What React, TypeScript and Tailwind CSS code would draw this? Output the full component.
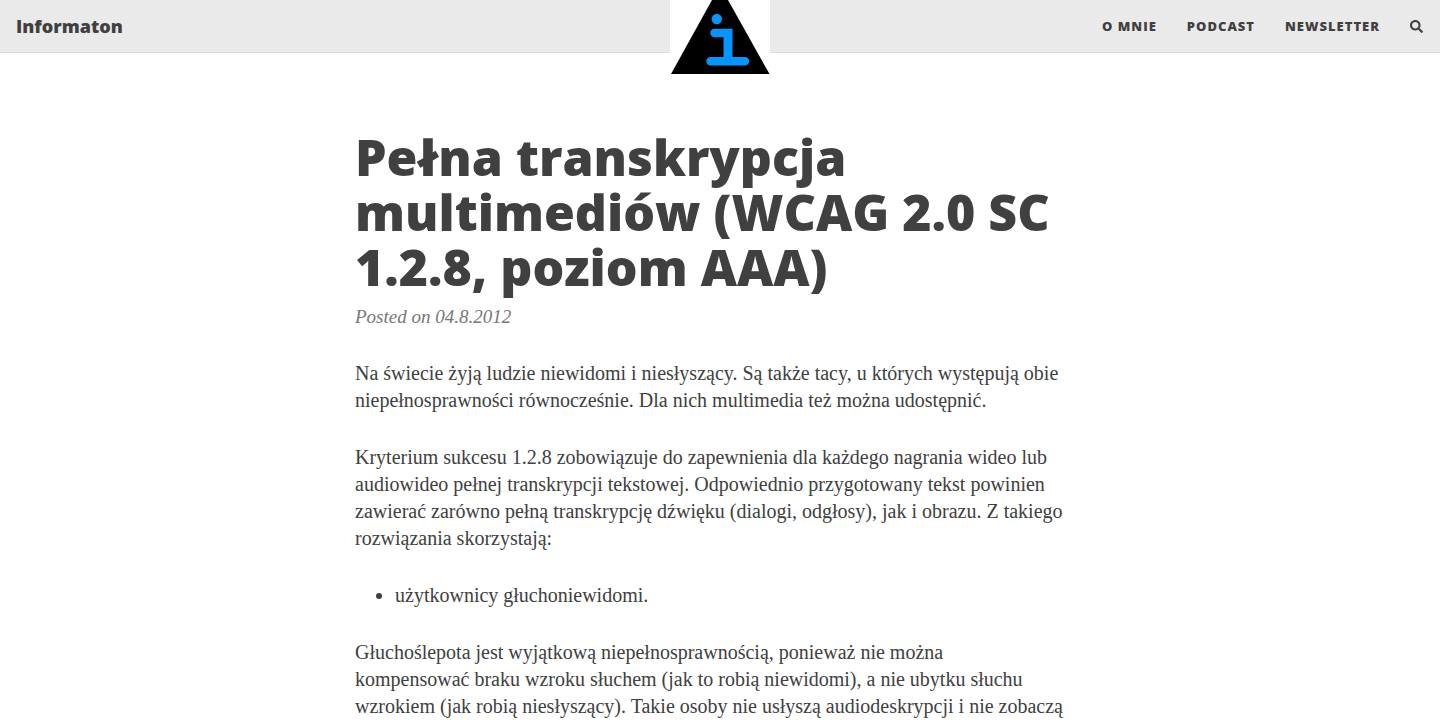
import { FaSearch } from "react-icons/fa";

const links = ["O mnie", "Podcast", "Newsletter"];

function Logo() {
  return (
    <svg viewBox="0 0 100 84" className="h-[84px] w-[100px] bg-white" aria-hidden="true">
      <path d="M42 0H58L99.5 74H1Z" fill="#000" />
      <circle cx="46.8" cy="19" r="5.2" fill="#0495ff" />
      <path
        d="M44.5 28.8H62.5V57H75a4.2 4.2 0 0 1 0 8.4H40.5a4.2 4.2 0 0 1 0-8.4H53.5V37.2H44.5a4.2 4.2 0 0 1 0-8.4Z"
        fill="#0495ff"
      />
    </svg>
  );
}

function Header() {
  return (
    <header className="relative flex items-center justify-between border-b border-[#dddddd] bg-[#eaeaea] pr-[17px] pl-4 font-['Open_Sans',sans-serif] text-[#404040]">
      <a href="#" className="py-3 text-lg leading-7 font-extrabold">
        Informaton
      </a>
      <a href="#" aria-label="Informaton" className="absolute top-0 left-1/2 -translate-x-1/2">
        <Logo />
      </a>
      <nav className="flex items-center gap-[30px] text-[13px] leading-5 font-extrabold tracking-[1px] uppercase">
        {links.map((link) => (
          <a key={link} href="#">
            {link}
          </a>
        ))}
        <button type="button" aria-label="Search">
          <FaSearch />
        </button>
      </nav>
    </header>
  );
}

export default function App() {
  return (
    <div className="h-screen overflow-hidden bg-white text-[#404040]">
      <Header />
      <main className="mx-auto max-w-[730px] pt-[77px] font-['Liberation_Serif',serif] text-xl leading-[27px]">
        <h1 className="font-['Open_Sans',sans-serif] text-[50px] leading-[55px] font-extrabold">
          Pełna transkrypcja
          <br />
          multimediów (WCAG 2.0 SC
          <br />
          1.2.8, poziom AAA)
        </h1>
        <p className="mt-2 text-[19px] text-[#777777] italic">Posted on 04.8.2012</p>
        <article className="mt-[30px] flex flex-col gap-[30px]">
          <p>
            Na świecie żyją ludzie niewidomi i niesłyszący. Są także tacy, u których występują obie
            <br />
            niepełnosprawności równocześnie. Dla nich multimedia też można udostępnić.
          </p>
          <p>
            Kryterium sukcesu 1.2.8 zobowiązuje do zapewnienia dla każdego nagrania wideo lub
            <br />
            audiowideo pełnej transkrypcji tekstowej. Odpowiednio przygotowany tekst powinien
            <br />
            zawierać zarówno pełną transkrypcję dźwięku (dialogi, odgłosy), jak i obrazu. Z takiego
            <br />
            rozwiązania skorzystają:
          </p>
          <ul className="list-disc pl-10">
            <li>użytkownicy głuchoniewidomi.</li>
          </ul>
          <p>
            Głuchoślepota jest wyjątkową niepełnosprawnością, ponieważ nie można
            <br />
            kompensować braku wzroku słuchem (jak to robią niewidomi), a nie ubytku słuchu
            <br />
            wzrokiem (jak robią niesłyszący). Takie osoby nie usłyszą audiodeskrypcji i nie zobaczą
          </p>
        </article>
      </main>
    </div>
  );
}
